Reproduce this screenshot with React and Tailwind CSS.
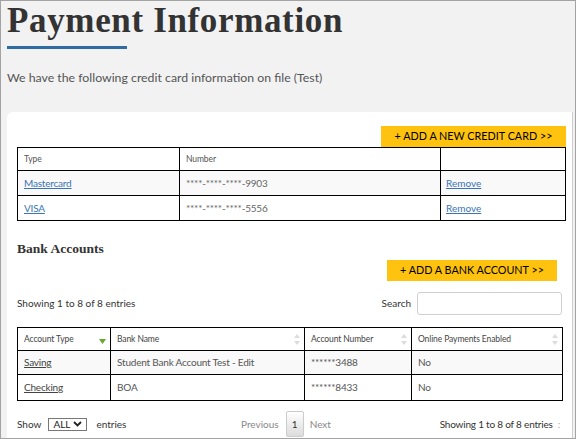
import React from "react";

function SortBoth() {
  return (
    <svg width="6" height="11" viewBox="0 0 6 11" className="shrink-0">
      <path d="M3 0 L6 4 L0 4 Z" fill="#dcdcdc" />
      <path d="M3 11 L6 7 L0 7 Z" fill="#dcdcdc" />
    </svg>
  );
}

function SortDown() {
  return (
    <svg width="7" height="5" viewBox="0 0 7 5" className="shrink-0 mt-[6px]">
      <path d="M0 0 L7 0 L3.5 5 Z" fill="#6aa52f" />
    </svg>
  );
}

export default function App() {
  return (
    <div className="h-[439px] w-[576px] overflow-hidden border border-[#a3a3a3] bg-[#f2f2f2] font-['Lato',sans-serif]">
      <div className="pl-[6px] pr-[2px]">
        <h1 className="mt-[1px] whitespace-nowrap font-['Liberation_Serif',serif] text-[35px] font-bold leading-[38px] tracking-[0.65px] text-[#333]">
          Payment Information
        </h1>
        <div className="mt-[6px] h-[3px] w-[120px] bg-[#2e6ca3]" />
        <p className="mt-[21px] text-[12.3px] leading-[16px] text-[#555]">
          We have the following credit card information on file (Test)
        </p>

        <div className="mt-[26px] h-[331px] rounded-tl-[6px] border-r border-[#cfcfcf] bg-white pl-[10px] pr-[6px] pt-[14px]">
          <div className="flex w-[549px] justify-end">
            <div className="flex h-[21px] w-[185px] items-center justify-center whitespace-nowrap bg-[#ffc20e] text-[10.8px] text-black">
              + ADD A NEW CREDIT CARD &gt;&gt;
            </div>
          </div>
          <table className="w-[549px] border-collapse text-[10px] tracking-[-0.2px]">
            <tbody>
              <tr className="h-[23px]">
                <td className="w-[162px] border border-black px-[6px] text-[8.5px] tracking-[-0.1px] text-[#555]">Type</td>
                <td className="w-[261px] border border-black px-[6px] text-[8.5px] tracking-[-0.1px] text-[#555]">Number</td>
                <td className="border border-black px-[6px]"></td>
              </tr>
              <tr className="h-[25px] bg-[#f9f9f9]">
                <td className="border border-black px-[6px]">
                  <span className="text-[#3a74b4] underline">Mastercard</span>
                </td>
                <td className="border border-black px-[6px] text-[#666]">****-****-****-9903</td>
                <td className="border border-black px-[5px]">
                  <span className="tracking-normal text-[#3a74b4] underline">Remove</span>
                </td>
              </tr>
              <tr className="h-[25px]">
                <td className="border border-black px-[6px]">
                  <span className="text-[#3a74b4] underline">VISA</span>
                </td>
                <td className="border border-black px-[6px] text-[#666]">****-****-****-5556</td>
                <td className="border border-black px-[5px]">
                  <span className="tracking-normal text-[#3a74b4] underline">Remove</span>
                </td>
              </tr>
            </tbody>
          </table>

          <h2 className="mt-[19px] font-['Liberation_Serif',serif] text-[13.5px] font-bold leading-[18px] text-[#333]">
            Bank Accounts
          </h2>

          <div className="mt-[2px] flex w-[546px] justify-end pr-[6px]">
            <div className="flex h-[21px] w-[170px] items-center justify-center whitespace-nowrap bg-[#ffc20e] text-[10.8px] text-black">
              + ADD A BANK ACCOUNT &gt;&gt;
            </div>
          </div>

          <div className="mt-[11px] flex w-[545px] items-center justify-between">
            <span className="text-[10px] text-[#333]">Showing 1 to 8 of 8 entries</span>
            <div className="flex items-center gap-[6px]">
              <span className="text-[10px] text-[#333]">Search</span>
              <div className="h-[23px] w-[145px] rounded-[3px] border border-[#cfcfcf] bg-white" />
            </div>
          </div>

          <table className="mt-[12px] w-[546px] border-collapse text-[10px] tracking-[-0.2px] text-[#555]">
            <tbody>
              <tr className="h-[23px] text-[8.5px] tracking-[-0.1px] text-[#444]">
                <td className="w-[93px] border border-black pl-[6px] pr-[4px]">
                  <div className="flex items-start justify-between">
                    <span>Account Type</span>
                    <SortDown />
                  </div>
                </td>
                <td className="w-[194px] border border-black pl-[6px] pr-[4px]">
                  <div className="flex items-center justify-between">
                    <span>Bank Name</span>
                    <SortBoth />
                  </div>
                </td>
                <td className="w-[107px] border border-black pl-[6px] pr-[4px]">
                  <div className="flex items-center justify-between">
                    <span>Account Number</span>
                    <SortBoth />
                  </div>
                </td>
                <td className="border border-black pl-[6px] pr-[4px]">
                  <div className="flex items-center justify-between">
                    <span>Online Payments Enabled</span>
                    <SortBoth />
                  </div>
                </td>
              </tr>
              <tr className="h-[24px] bg-[#f9f9f9]">
                <td className="border border-black px-[6px]">
                  <span className="text-[#444] underline">Saving</span>
                </td>
                <td className="border border-black px-[6px]">Student Bank Account Test - Edit</td>
                <td className="border border-black px-[6px]">******3488</td>
                <td className="border border-black px-[6px]">No</td>
              </tr>
              <tr className="h-[26px]">
                <td className="border border-black px-[6px]">
                  <span className="text-[#444] underline">Checking</span>
                </td>
                <td className="border border-black px-[6px]">BOA</td>
                <td className="border border-black px-[6px]">******8433</td>
                <td className="border border-black px-[6px]">No</td>
              </tr>
            </tbody>
          </table>

          <div className="mt-[10px] flex h-[26px] w-[543px] items-center text-[10px] text-[#333]">
            <div className="flex w-[224px] items-center">
              <span>Show</span>
              <div className="ml-[7px] flex h-[13px] w-[39px] items-center gap-[3px] border border-[#777] pl-[4px] text-[10px] text-[#222]">
                <span>ALL</span>
                <svg width="9" height="6" viewBox="0 0 9 6">
                  <path d="M1 1 L4.5 4.5 L8 1" stroke="#222" strokeWidth="1.8" fill="none" />
                </svg>
              </div>
              <span className="ml-[9px]">entries</span>
            </div>
            <div className="flex items-center text-[#888]">
              <span>Previous</span>
              <div className="ml-[7px] flex h-[26px] w-[18px] items-center justify-center rounded-[2px] border border-[#ccc] bg-gradient-to-b from-[#fff] to-[#dcdcdc] text-[#333]">
                1
              </div>
              <span className="ml-[6px]">Next</span>
            </div>
            <div className="ml-auto flex items-center gap-[5px] tracking-[-0.2px]">
              <span>Showing 1 to 8 of 8 entries</span>
              <span className="text-[#aaa]">:</span>
            </div>
          </div>
        </div>
      </div>
    </div>
  );
}
